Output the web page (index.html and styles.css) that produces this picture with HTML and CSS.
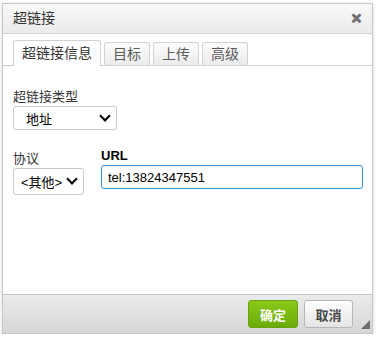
FILE: index.html
```html
<!DOCTYPE html>
<html lang="zh-CN">
<head>
    <meta charset="UTF-8">
    <title>超链接</title>
    <link rel="stylesheet" href="styles.css">
</head>
<body>
    <div class="dialog">
        <div class="dialog-title">
            <span>超链接</span>
            <span class="close">&#x2715;</span>
        </div>
        <div class="tabs">
            <div class="tab active">超链接信息</div>
            <div class="tab">目标</div>
            <div class="tab">上传</div>
            <div class="tab">高级</div>
        </div>
        <div class="dialog-body">
            <div class="field type-field">
                <label>超链接类型</label>
                <div class="select select-type">地址<span class="caret"></span></div>
            </div>
            <div class="row">
                <div class="field">
                    <label>协议</label>
                    <div class="select select-protocol">&lt;其他&gt;<span class="caret"></span></div>
                </div>
                <div class="field url-field">
                    <label class="bold">URL</label>
                    <input class="url-input" type="text" value="tel:13824347551">
                </div>
            </div>
        </div>
        <div class="dialog-footer">
            <button class="btn btn-ok">确定</button>
            <button class="btn">取消</button>
            <span class="resize"></span>
        </div>
    </div>
</body>
</html>
```

FILE: styles.css
```css
body {
    margin: 0;
    background: #fff;
    font-family: "Liberation Sans", Arial, "Noto Sans CJK SC", sans-serif;
    color: #333;
}
.dialog {
    margin: 3px 0 0 2px;
    width: 369px;
    height: 329px;
    border: 1px solid #c6c6c6;
    box-shadow: 0 1px 4px rgba(0, 0, 0, 0.15);
    display: flex;
    flex-direction: column;
    background: #fff;
}
.dialog-title {
    height: 29px;
    line-height: 29px;
    padding: 0 10px;
    font-size: 14px;
    color: #333;
    background: linear-gradient(#f8f8f8, #ebebeb);
    border-bottom: 1px solid #d1d1d1;
    display: flex;
    justify-content: space-between;
}
.close {
    font-size: 13px;
    font-weight: bold;
    color: #707070;
    -webkit-text-stroke: 1px #707070;
}
.tabs {
    display: flex;
    align-items: flex-end;
    gap: 3px;
    padding: 0 10px;
    height: 31px;
    border-bottom: 1px solid #d1d1d1;
    background: #fff;
}
.tab {
    height: 22px;
    line-height: 22px;
    padding: 0 8px;
    font-size: 14px;
    color: #595959;
    border: 1px solid #d1d1d1;
    border-bottom: none;
    border-radius: 3px 3px 0 0;
    background: linear-gradient(#fdfdfd, #ebebeb);
}
.tab.active {
    height: 25px;
    line-height: 25px;
    margin-bottom: -1px;
    color: #333;
    background: #fff;
}
.dialog-body {
    flex: 1;
    padding: 23px 10px 0;
    font-size: 13px;
}
.field label {
    display: block;
    line-height: 16px;
    margin-bottom: 1px;
}
.bold {
    font-weight: bold;
}
.select {
    display: flex;
    align-items: center;
    justify-content: space-between;
    height: 23px;
    border: 1px solid #c8c8c8;
    border-radius: 3px;
    background: #fff;
    padding: 0 7px 0 12px;
    box-sizing: border-box;
    color: #000;
    font-size: 13px;
}
.select-type {
    width: 104px;
    height: 24px;
}
.select-protocol {
    width: 71px;
    height: 27px;
    padding-left: 7px;
}
.caret {
    width: 6px;
    height: 6px;
    border-right: 2px solid #000;
    border-bottom: 2px solid #000;
    transform: rotate(45deg);
    margin-top: -5px;
}
.row {
    display: flex;
    gap: 17px;
    margin-top: 21px;
}
.url-field {
    flex: 1;
    margin-top: -3px;
}
.url-field label {
    font-size: 13px;
    color: #000;
}
.url-input {
    box-sizing: border-box;
    width: 262px;
    height: 24px;
    border: 1px solid #3592cf;
    border-radius: 3px;
    padding: 0 6px;
    font-family: "Liberation Sans", Arial, sans-serif;
    font-size: 13px;
    color: #000;
    outline: none;
}
.dialog-footer {
    height: 38px;
    border-top: 1px solid #c6c6c6;
    background: linear-gradient(#ebebeb, #d6d6d6);
    display: flex;
    align-items: center;
    justify-content: flex-end;
    gap: 6px;
    padding-right: 19px;
    position: relative;
}
.btn {
    height: 28px;
    width: 49px;
    border: 1px solid #b6b6b6;
    border-radius: 3px;
    background: linear-gradient(#fff, #e4e4e4);
    font-family: "Noto Sans CJK SC", sans-serif;
    font-size: 13px;
    font-weight: bold;
    color: #474747;
    padding: 0;
}
.btn-ok {
    width: 50px;
    border-color: #6ba20d;
    background: linear-gradient(#8ac919, #6aab08);
    color: #fff;
}
.resize {
    position: absolute;
    right: 2px;
    bottom: 4px;
    width: 0;
    height: 0;
    border-left: 9px solid transparent;
    border-bottom: 9px solid #707070;
}
```
